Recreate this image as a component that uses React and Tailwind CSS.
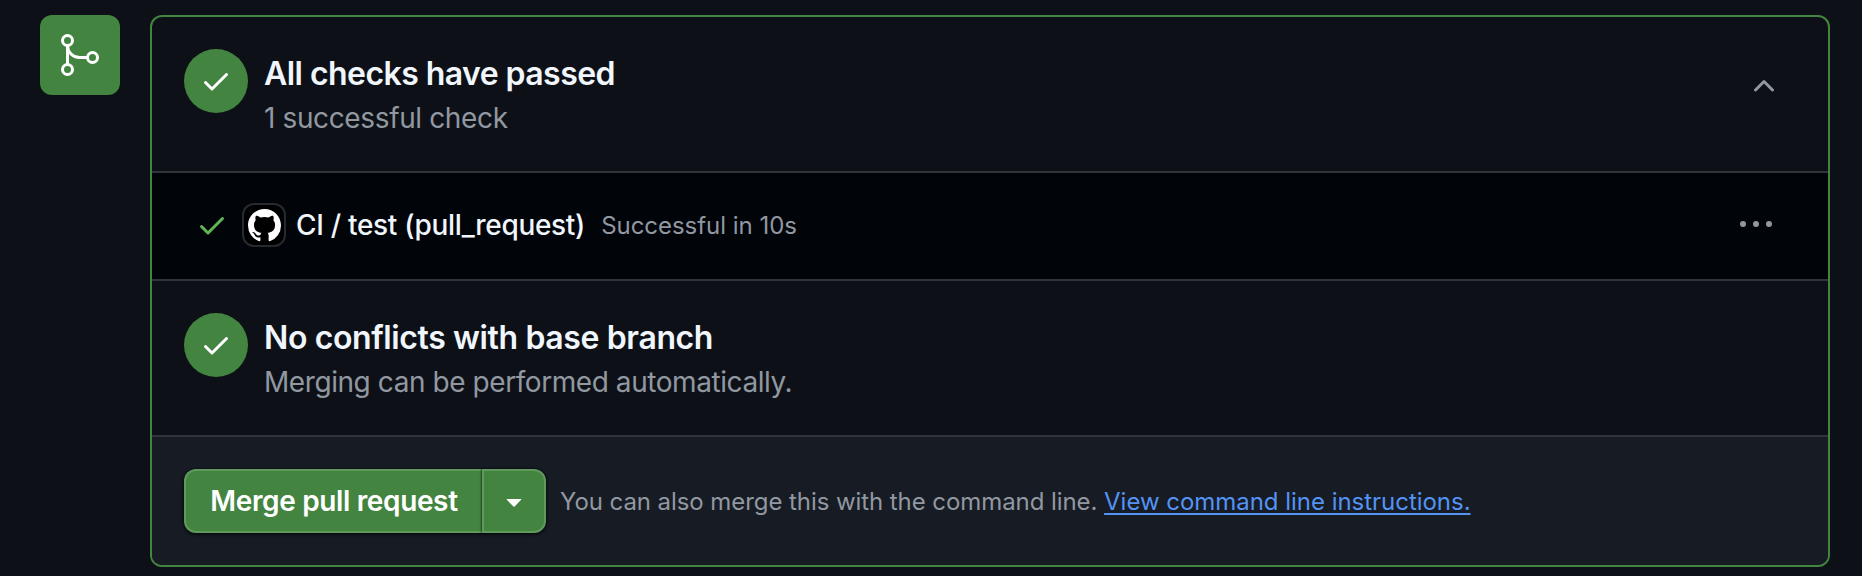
const CHECK =
  'M13.78 4.22a.75.75 0 0 1 0 1.06l-7.25 7.25a.75.75 0 0 1-1.06 0L2.22 9.28a.751.751 0 0 1 .018-1.042.751.751 0 0 1 1.042-.018L6 10.94l6.72-6.72a.75.75 0 0 1 1.06 0Z';
const CHEVRON_UP =
  'M3.22 10.53a.749.749 0 0 1 0-1.06l4.25-4.25a.749.749 0 0 1 1.06 0l4.25 4.25a.749.749 0 1 1-1.06 1.06L8 6.811 4.28 10.53a.749.749 0 0 1-1.06 0Z';
const KEBAB =
  'M8 9a1.5 1.5 0 1 0 0-3 1.5 1.5 0 0 0 0 3ZM1.5 9a1.5 1.5 0 1 0 0-3 1.5 1.5 0 0 0 0 3Zm13 0a1.5 1.5 0 1 0 0-3 1.5 1.5 0 0 0 0 3Z';
const TRIANGLE_DOWN =
  'm4.427 7.427 3.396 3.396a.25.25 0 0 0 .354 0l3.396-3.396A.25.25 0 0 0 11.396 7H4.604a.25.25 0 0 0-.177.427Z';
const GITHUB_MARK =
  'M8 0c4.42 0 8 3.58 8 8a8.013 8.013 0 0 1-5.45 7.59c-.4.08-.55-.17-.55-.38 0-.27.01-1.13.01-2.2 0-.75-.25-1.23-.54-1.48 1.78-.2 3.65-.88 3.65-3.95 0-.88-.31-1.59-.82-2.15.08-.2.36-1.02-.08-2.12 0 0-.67-.22-2.2.82-.64-.18-1.32-.27-2-.27-.68 0-1.36.09-2 .27-1.53-1.03-2.2-.82-2.2-.82-.44 1.1-.16 1.92-.08 2.12-.51.56-.82 1.28-.82 2.15 0 3.06 1.86 3.75 3.64 3.95-.23.2-.44.55-.51 1.07-.46.21-1.61.55-2.33-.66-.15-.24-.6-.83-1.23-.82-.67.01-.27.38.01.53.34.19.73.9.82 1.13.16.45.68 1.31 2.69.94 0 .67.01 1.3.01 1.49 0 .21-.15.45-.55.38A7.995 7.995 0 0 1 0 8c0-4.42 3.58-8 8-8Z';

function Icon({ path, className }) {
  return (
    <svg viewBox="0 0 16 16" fill="currentColor" className={className} aria-hidden="true">
      <path d={path} />
    </svg>
  );
}

function MergeIcon() {
  return (
    <svg viewBox="0 0 24 24" fill="none" stroke="currentColor" strokeWidth="1.5" className="size-12" aria-hidden="true">
      <circle cx="5.75" cy="4.75" r="2.5" />
      <circle cx="5.75" cy="19.25" r="2.5" />
      <circle cx="18.25" cy="13.25" r="2.5" />
      <path d="M5.75 7.25v9.5M5.75 7.25a6 6 0 0 0 6 6h4" />
    </svg>
  );
}

function StatusSection({ title, detail, titleClass, detailClass, children }) {
  return (
    <section className="flex h-[156px] items-start border-b-2 border-[#2f343d] px-8 pt-8">
      <div className="flex size-16 shrink-0 items-center justify-center rounded-full bg-[#438440] text-white">
        <Icon path={CHECK} className="size-8" />
      </div>
      <div className="ml-4 flex-1 whitespace-nowrap pt-[3px]">
        <h3 className={'text-[32px] font-semibold leading-[44px] text-[#f0f6fc] ' + titleClass}>{title}</h3>
        <p className={'text-[28px] leading-[44px] text-[#9198a1] ' + detailClass}>{detail}</p>
      </div>
      {children}
    </section>
  );
}

export default function App() {
  return (
    <main className="flex h-[576px] w-full items-start bg-[#0d1117] pl-10 pr-8 pt-[15px] font-[Inter,sans-serif]">
      <div className="mr-[30px] flex size-20 shrink-0 items-center justify-center rounded-xl bg-[#438440] text-white">
        <MergeIcon />
      </div>
      <div className="flex h-[552px] flex-1 flex-col overflow-hidden rounded-xl border-2 border-[#438440]">
        <StatusSection
          title="All checks have passed"
          detail="1 successful check"
          titleClass="tracking-[-0.55px]"
          detailClass="tracking-[-0.37px]"
        >
          <button className="mr-4 mt-[21px] text-[#9198a1]">
            <Icon path={CHEVRON_UP} className="size-8" />
          </button>
        </StatusSection>

        <div className="flex h-[108px] items-center border-b-2 border-[#2f343d] bg-[#010409] pb-[2px] pl-11 pr-14">
          <Icon path={CHECK} className="size-8 text-[#5fb855]" />
          <div className="ml-[14px] flex size-11 items-center justify-center rounded-xl border-2 border-[#26292e] bg-black text-white">
            <Icon path={GITHUB_MARK} className="size-[33px]" />
          </div>
          <span className="ml-[10px] whitespace-nowrap text-[28px] font-[450] leading-[42px] tracking-[-0.3px] text-[#f0f6fc]">
            CI / test (pull_request)
          </span>
          <span className="ml-4 whitespace-nowrap pt-[2px] text-[24px] leading-[36px] tracking-[-0.03px] text-[#9198a1]">
            Successful in 10s
          </span>
          <button className="ml-auto text-[#9198a1]">
            <Icon path={KEBAB} className="size-8 overflow-visible" />
          </button>
        </div>

        <StatusSection
          title="No conflicts with base branch"
          detail="Merging can be performed automatically."
          titleClass="tracking-[-0.38px]"
          detailClass="tracking-[-0.43px]"
        />

        <footer className="flex flex-1 items-center bg-[#171b23] px-8">
          <div className="flex h-16 w-[362px] rounded-xl shadow-[0_1px_3px_1px_rgba(1,4,9,0.6)]">
            <button className="w-[298px] whitespace-nowrap rounded-l-xl border-2 border-r-0 border-[#5f9a5c] bg-[#438440] text-[28px] font-semibold leading-none tracking-[-0.36px] text-white">
              Merge pull request
            </button>
            <button className="flex w-16 items-center justify-center rounded-r-xl border-2 border-[#5f9a5c] bg-[#438440] text-white shadow-[-1px_0_2px_rgba(1,4,9,0.5)]">
              <Icon path={TRIANGLE_DOWN} className="size-8" />
            </button>
          </div>
          <p className="ml-[14px] whitespace-nowrap pt-[2px] text-[24px] leading-[36px] tracking-[-0.07px] text-[#9198a1]">
            <span>You can also merge this with the command line.</span>{' '}
            <a href="#" className="tracking-[-0.03px] text-[#5393f3] underline decoration-2 underline-offset-[3px]">
              View command line instructions.
            </a>
          </p>
        </footer>
      </div>
    </main>
  );
}
